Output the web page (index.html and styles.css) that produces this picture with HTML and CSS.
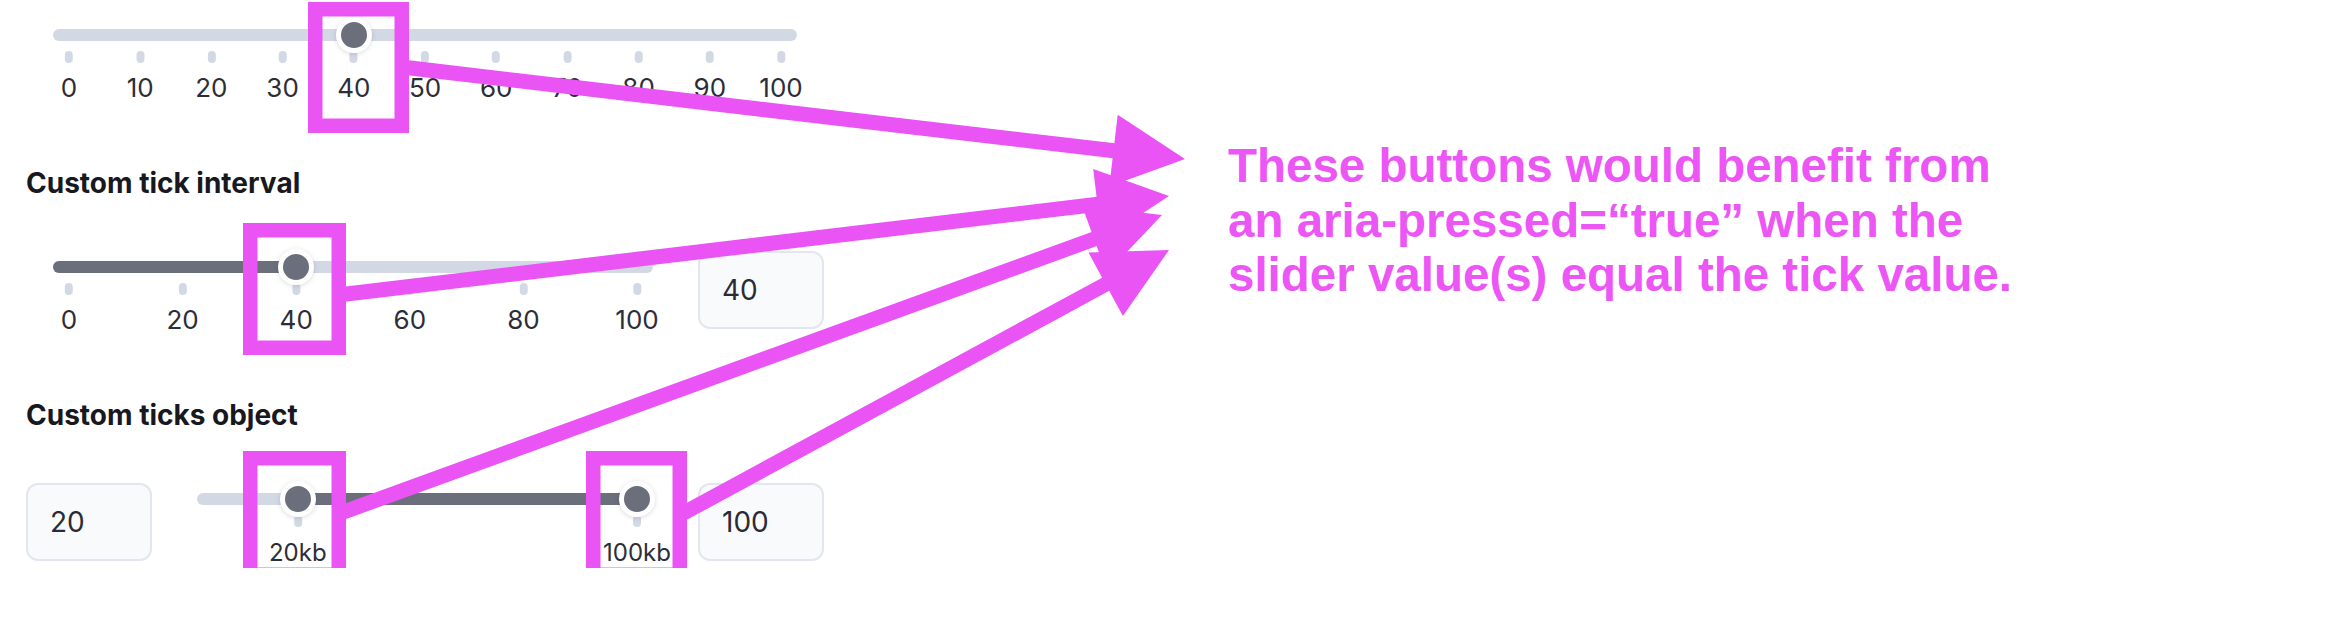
FILE: index.html
```html
<!DOCTYPE html>
<html lang="en">
<head>
    <meta charset="UTF-8">
    <meta name="viewport" content="width=device-width, initial-scale=1.0">
    <title>Slider ticks</title>
    <link rel="stylesheet" href="styles.css">
</head>
<body>
    <div class="page">
        <div class="demos">
            <div class="demo first">
                <div class="slider-row indented">
                    <div class="slider wide">
                        <div class="track">
                            <div class="thumb" style="--v: 0.4"></div>
                        </div>
                        <div class="ticks">
                            <button class="tick" style="--v: 0"><span class="mark"></span><span class="label">0</span></button>
                            <button class="tick" style="--v: 0.1"><span class="mark"></span><span class="label">10</span></button>
                            <button class="tick" style="--v: 0.2"><span class="mark"></span><span class="label">20</span></button>
                            <button class="tick" style="--v: 0.3"><span class="mark"></span><span class="label">30</span></button>
                            <button class="tick" style="--v: 0.4"><span class="mark"></span><span class="label">40</span></button>
                            <button class="tick" style="--v: 0.5"><span class="mark"></span><span class="label">50</span></button>
                            <button class="tick" style="--v: 0.6"><span class="mark"></span><span class="label">60</span></button>
                            <button class="tick" style="--v: 0.7"><span class="mark"></span><span class="label">70</span></button>
                            <button class="tick" style="--v: 0.8"><span class="mark"></span><span class="label">80</span></button>
                            <button class="tick" style="--v: 0.9"><span class="mark"></span><span class="label">90</span></button>
                            <button class="tick" style="--v: 1"><span class="mark"></span><span class="label">100</span></button>
                        </div>
                    </div>
                </div>
            </div>

            <div class="demo">
                <h3>Custom tick interval</h3>
                <div class="slider-row indented">
                    <div class="slider medium">
                        <div class="track">
                            <div class="fill" style="--from: 0; --to: 0.4"></div>
                            <div class="thumb" style="--v: 0.4"></div>
                        </div>
                        <div class="ticks">
                            <button class="tick" style="--v: 0"><span class="mark"></span><span class="label">0</span></button>
                            <button class="tick" style="--v: 0.2"><span class="mark"></span><span class="label">20</span></button>
                            <button class="tick" style="--v: 0.4"><span class="mark"></span><span class="label">40</span></button>
                            <button class="tick" style="--v: 0.6"><span class="mark"></span><span class="label">60</span></button>
                            <button class="tick" style="--v: 0.8"><span class="mark"></span><span class="label">80</span></button>
                            <button class="tick" style="--v: 1"><span class="mark"></span><span class="label">100</span></button>
                        </div>
                    </div>
                    <input class="value-box" type="text" value="40">
                </div>
            </div>

            <div class="demo">
                <h3>Custom ticks object</h3>
                <div class="slider-row">
                    <input class="value-box" type="text" value="20">
                    <div class="slider narrow">
                        <div class="track">
                            <div class="fill" style="--from: 0.2; --to: 1"></div>
                            <div class="thumb" style="--v: 0.2"></div>
                            <div class="thumb" style="--v: 1"></div>
                        </div>
                        <div class="ticks">
                            <button class="tick" style="--v: 0.2"><span class="mark"></span><span class="label">20kb</span></button>
                            <button class="tick" style="--v: 1"><span class="mark"></span><span class="label">100kb</span></button>
                        </div>
                    </div>
                    <input class="value-box" type="text" value="100">
                </div>
            </div>
        </div>

        <p class="note">These buttons would benefit from<br>an aria-pressed=“true” when the<br>slider value(s) equal the tick value.</p>
    </div>

    <!-- callout boxes and arrows -->
    <svg class="callouts" width="2338" height="618" viewBox="0 0 2338 618">
        <g fill="none" stroke="#ea54f4" stroke-width="14.5">
            <rect x="315.25" y="9.25" width="86.5" height="116.5"/>
            <rect x="250.25" y="230.25" width="88.5" height="117.5"/>
            <rect x="250.25" y="458.25" width="88.5" height="116.5"/>
            <rect x="593.25" y="458.25" width="86.5" height="116.5"/>
        </g>
        <g stroke="#ea54f4" stroke-width="15">
            <line x1="402" y1="67" x2="1116" y2="151"/>
            <line x1="338" y1="295" x2="1100" y2="204"/>
            <line x1="338" y1="514" x2="1097" y2="238"/>
            <line x1="680" y1="515" x2="1108" y2="283"/>
        </g>
        <g fill="#ea54f4">
            <polygon points="1185,159 1117.7,114.8 1109.3,186.4"/>
            <polygon points="1169,196 1093.2,168.9 1101.8,240.3"/>
            <polygon points="1162,215 1082,205.8 1106.6,273.4"/>
            <polygon points="1169,250 1088.5,252.6 1122.9,315.9"/>
        </g>
    </svg>
</body>
</html>
```

FILE: styles.css
```css
body {
    margin: 0;
    padding-left: 26px;
    position: relative;
    background: #fff;
    font-family: "Inter", "Noto Sans", sans-serif;
    color: #2d2d37;
}
.page {
    display: flex;
}
.demos {
    flex: none;
    width: 1202px;
}
.demo.first {
    margin-top: 19px;
}
.demo h3 {
    margin: 62px 0 0;
    font-size: 28px;
    line-height: 34px;
    font-weight: 700;
    color: #18181f;
}
.demo h3 + .slider-row {
    margin-top: 51px;
}
.slider-row {
    display: flex;
    align-items: flex-start;
    gap: 45px;
}
.slider-row.indented {
    padding-left: 27px;
}
.slider {
    padding-top: 10px;
}
.slider.wide {
    width: 744px;
}
.slider.medium {
    width: 600px;
}
.slider.narrow {
    width: 456px;
}
.track {
    position: relative;
    height: 12px;
    border-radius: 6px;
    background: #d3d9e4;
}
.fill {
    position: absolute;
    top: 0;
    bottom: 0;
    left: calc(16px + (100% - 32px) * var(--from));
    right: calc(16px + (100% - 32px) * (1 - var(--to)));
    background: #6b6f7c;
}
.fill[style*="--from: 0;"] {
    left: 0;
    border-radius: 6px 0 0 6px;
}
.thumb {
    position: absolute;
    z-index: 1;
    top: 50%;
    left: calc(16px + (100% - 32px) * var(--v));
    width: 36px;
    height: 36px;
    box-sizing: border-box;
    border: 5px solid #fff;
    border-radius: 50%;
    background: #6b6f7c;
    box-shadow: 0 1px 5px rgba(30, 35, 50, 0.16);
    transform: translate(-50%, -50%);
}
.ticks {
    position: relative;
    height: 63px;
}
.tick {
    position: absolute;
    top: 0;
    left: calc(16px + (100% - 32px) * var(--v));
    transform: translateX(-50%);
    display: flex;
    flex-direction: column;
    align-items: center;
    padding: 10px 0 0;
    border: 0;
    background: none;
    font: inherit;
    color: inherit;
    cursor: pointer;
}
.mark {
    width: 8px;
    height: 12px;
    border-radius: 4px;
    background: #d3d9e4;
}
.label {
    margin-top: 9px;
    font-size: 26px;
    line-height: 32px;
    white-space: nowrap;
}
/* unit labels run a little smaller */
.slider.narrow .label {
    margin-top: 10px;
    font-size: 24px;
}
.value-box {
    flex: none;
    width: 126px;
    height: 78px;
    box-sizing: border-box;
    margin: 0;
    padding: 0 22px;
    border: 2px solid #e3e6ef;
    border-radius: 12px;
    background: #f9fafc;
    font-family: "Inter", "Noto Sans", sans-serif;
    font-size: 28px;
    color: #2b2b35;
    outline: none;
}
.note {
    margin: 0;
    padding-top: 139px;
    font-family: "Liberation Sans", Arial, sans-serif;
    font-weight: 700;
    font-size: 47.5px;
    line-height: 54.5px;
    color: #eb56f5;
    white-space: nowrap;
}
.callouts {
    position: absolute;
    top: 0;
    left: 0;
    pointer-events: none;
}
```
